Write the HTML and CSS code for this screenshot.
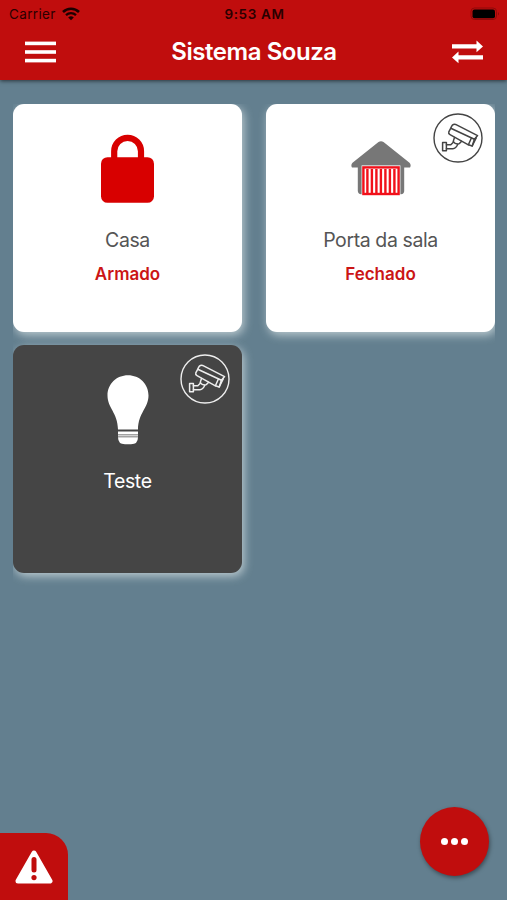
FILE: index.html
```html
<!DOCTYPE html>
<html lang="pt-BR">

<head>
    <meta charset="UTF-8">
    <meta name="viewport" content="width=device-width, initial-scale=1.0">
    <title>Sistema Souza</title>
    <link rel="stylesheet" href="styles.css">
</head>

<body>
    <svg width="0" height="0" class="symbols">
        <symbol id="camera" viewBox="0 0 50 50">
            <circle cx="25" cy="25" r="24" stroke-width="1.4" />
            <g stroke-width="1.5" stroke-linejoin="round" stroke-linecap="round">
                <path d="M22.6 11.4 L44.6 22.6 L41.4 26.2 L17.8 15.2 Q19.3 10.6 22.6 11.4 Z" />
                <path d="M17.8 15.2 L15.8 18.8 Q15.2 20.6 17 21.6 L35.4 31.8 L39.2 33 L43.2 24.8" />
                <path d="M35.4 31.8 L38.4 25 M39.2 33 L41.4 26.2" />
                <path d="M21.5 24.4 L20.2 28.6 Q22.6 31.8 26.4 30.6 L28.4 28.4" />
                <rect x="9.6" y="29.4" width="3.8" height="8.4" />
                <path d="M13.4 31.8 H17.8 L20.6 29 M13.4 35.8 H19.8 Q23 35.3 24.8 31.2" />
            </g>
        </symbol>
    </svg>

    <div class="app">
        <header class="header">
            <div class="status-bar">
                <div class="carrier">
                    <span>Carrier</span>
                    <svg width="18" height="14" viewBox="0 0 18 14" fill="none" stroke="#1c0000">
                        <path d="M1 5 A11.5 11.5 0 0 1 17 5" stroke-width="2.6" />
                        <path d="M4 8.2 A7.3 7.3 0 0 1 14 8.2" stroke-width="2.3" />
                        <path d="M9 13.3 L6.2 10.5 A4 4 0 0 1 11.8 10.5 Z" fill="#1c0000" stroke="none" />
                    </svg>
                </div>
                <span class="time">9:53 AM</span>
                <svg class="battery" width="30" height="14" viewBox="0 0 30 14">
                    <rect x="1" y="1" width="25.5" height="11.5" rx="3.5" fill="none" stroke="#8f0a0a" />
                    <rect x="2.5" y="2.5" width="22.5" height="8.7" rx="2" fill="#000" />
                    <path d="M28 5 Q30 6.8 28 8.6 Z" fill="#8f0a0a" />
                </svg>
            </div>
            <nav class="navbar">
                <svg width="31" height="22" viewBox="0 0 31 22" fill="#fff">
                    <rect width="31" height="3.6" y="0.6" />
                    <rect width="31" height="3.6" y="9.2" />
                    <rect width="31" height="3.6" y="17.8" />
                </svg>
                <h1 class="title">Sistema Souza</h1>
                <svg width="31" height="24" viewBox="0 0 31 24" fill="#fff">
                    <path d="M0 4.3 H24.5 V0.5 L31 6.4 L24.5 12.2 V8.6 H0 Z" />
                    <path d="M31 15.2 H6.5 V11.6 L0 17.5 L6.5 23.3 V19.5 H31 Z" />
                </svg>
            </nav>
        </header>

        <main class="cards">
            <div class="card">
                <div class="card-icon">
                    <svg width="54" height="70" viewBox="0 0 54 70">
                        <path d="M13.2 26 V17.2 A13.4 13.4 0 0 1 40 17.2 V26" fill="none" stroke="#d80000" stroke-width="6.2" />
                        <rect x="0" y="23.2" width="53" height="45.6" rx="6.5" fill="#d80000" />
                    </svg>
                </div>
                <p class="name">Casa</p>
                <p class="status">Armado</p>
            </div>

            <div class="card">
                <svg class="camera" width="50" height="50"><use href="#camera" /></svg>
                <div class="card-icon">
                    <svg width="60" height="55" viewBox="0 0 60 55">
                        <path d="M27.5 1 Q30 -0.3 32.5 1 L58.5 21.8 Q60.5 24 59 26.6 H53.2 V50 Q53.2 53 50 53.2 H10 Q7 53 6.8 50 V26.6 H1 Q-0.5 24 1.5 21.8 Z" fill="#777" />
                        <rect x="10.6" y="24.4" width="38.8" height="30.4" fill="#fff" />
                        <rect x="12.4" y="26.4" width="35.2" height="26.6" fill="#fff" stroke="#f1101a" stroke-width="2.4" />
                        <path d="M16.4 28 V52 M20.9 28 V52 M25.4 28 V52 M29.9 28 V52 M34.4 28 V52 M38.9 28 V52 M43.4 28 V52" stroke="#f1101a" stroke-width="2.4" />
                    </svg>
                </div>
                <p class="name">Porta da sala</p>
                <p class="status">Fechado</p>
            </div>

            <div class="card dark">
                <svg class="camera" width="50" height="50"><use href="#camera" /></svg>
                <div class="card-icon">
                    <svg width="42" height="70" viewBox="0 0 42 70" fill="#fff">
                        <path d="M21 0.3 C9.5 0.3 0.5 9 0.5 20.5 C0.5 33 10.6 37.5 11 54.5 H31 C31.4 37.5 41.5 33 41.5 20.5 C41.5 9 32.5 0.3 21 0.3 Z" />
                        <path d="M11 56.6 H31 V59.4 H11 Z M11 60.3 H31 V61.4 H11 Z M11 62.3 H31 Q31 69.3 24 69.3 H18 Q11 69.3 11 62.3 Z" />
                    </svg>
                </div>
                <p class="name">Teste</p>
            </div>
        </main>

        <div class="alert">
            <svg width="38" height="34" viewBox="0 0 38 34">
                <path d="M19 3 L35 31 H3 Z" fill="#fff" stroke="#fff" stroke-width="5" stroke-linejoin="round" />
                <path d="M19 9.5 V20" stroke="#c00d0d" stroke-width="5" stroke-linecap="round" />
                <circle cx="19" cy="27.6" r="2.6" fill="#c00d0d" />
            </svg>
        </div>

        <div class="fab">
            <span class="dot"></span>
            <span class="dot"></span>
            <span class="dot"></span>
        </div>
    </div>
</body>

</html>
```
FILE: styles.css
```css
* {
    box-sizing: border-box;
}

body {
    margin: 0;
    font-family: Inter, "Liberation Sans", sans-serif;
    background-color: #637f8f;
}

svg {
    display: block;
}

.symbols {
    position: absolute;
}

.app {
    position: relative;
    height: 900px;
    overflow: hidden;
}

.header {
    height: 80px;
    background-color: #c00d0d;
    box-shadow: 0 1px 4px rgba(0, 0, 0, 0.6);
}

.status-bar {
    display: grid;
    grid-template-columns: 1fr auto 1fr;
    align-items: center;
    height: 27px;
    padding: 0 7px 0 9px;
    font-size: 13.5px;
    color: #2a0000;
}

.carrier {
    display: flex;
    align-items: center;
    gap: 6px;
    letter-spacing: 0.35px;
}

.time {
    font-weight: 600;
    font-size: 13.5px;
    letter-spacing: 0.65px;
}

.battery {
    justify-self: end;
}

.navbar {
    display: flex;
    justify-content: space-between;
    align-items: center;
    height: 50px;
    padding: 0 24px 0 25px;
}

.title {
    margin: 0;
    padding-bottom: 2px;
    font-size: 24px;
    font-weight: 600;
    letter-spacing: -0.45px;
    color: #fff;
}

.cards {
    display: grid;
    grid-template-columns: 229px 229px;
    grid-auto-rows: 228px;
    gap: 13px 24px;
    margin: 23.5px 12px 0 13px;
    height: 490px;
    overflow: hidden;
}

.card {
    position: relative;
    display: flex;
    flex-direction: column;
    align-items: center;
    border-radius: 11px;
    background-color: #fff;
    box-shadow: 2px 3px 10px rgba(225, 235, 235, 0.7);
    color: #555;
}

.card.dark {
    background-color: #454545;
    color: #fff;
}

.card-icon {
    display: flex;
    align-items: center;
    justify-content: center;
    height: 70px;
    margin-top: 30px;
}

.name {
    margin: 23px 0 0;
    font-size: 19.5px;
    line-height: 26px;
    letter-spacing: -0.4px;
}

.status {
    margin: 10px 0 0;
    font-size: 17px;
    font-weight: 600;
    line-height: 22px;
    color: #cb1515;
}

.camera {
    position: absolute;
    top: 9px;
    right: 12px;
    fill: none;
    stroke: #444;
}

.dark .camera {
    stroke: #eee;
}

.alert {
    position: absolute;
    left: 0;
    bottom: 0;
    display: flex;
    justify-content: center;
    align-items: center;
    width: 68px;
    height: 67px;
    border-top-right-radius: 22px;
    background-color: #c00d0d;
}

.fab {
    position: absolute;
    right: 18px;
    bottom: 24px;
    display: flex;
    justify-content: center;
    align-items: center;
    gap: 3px;
    width: 69px;
    height: 69px;
    border-radius: 50%;
    background-color: #c00d0d;
    box-shadow: 1px 2px 4px rgba(0, 0, 0, 0.4);
}

.dot {
    width: 7px;
    height: 7px;
    border-radius: 50%;
    background-color: #fff;
}
```
